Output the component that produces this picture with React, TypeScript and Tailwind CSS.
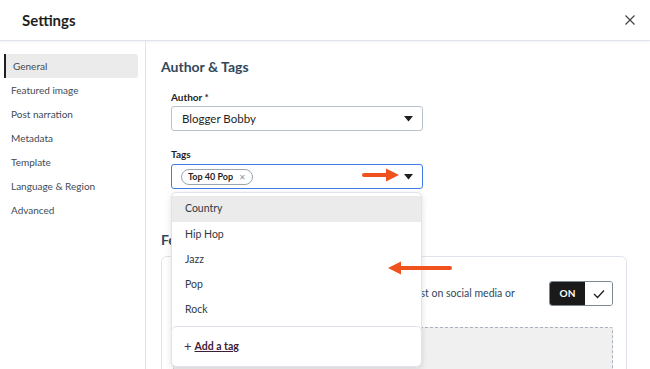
import React from "react";

const navItems = [
  "General",
  "Featured image",
  "Post narration",
  "Metadata",
  "Template",
  "Language & Region",
  "Advanced",
];

const options = ["Country", "Hip Hop", "Jazz", "Pop", "Rock"];

function Caret() {
  return (
    <svg width="9" height="6" viewBox="0 0 9 6" className="shrink-0">
      <path d="M0 0 L9 0 L4.5 5.5 Z" fill="#1f1f1f" />
    </svg>
  );
}

export default function App() {
  return (
    <div
      className="relative w-[650px] h-[369px] overflow-hidden bg-white text-[#33475b]"
      style={{ fontFamily: 'Lato, "Noto Sans", sans-serif' }}
    >
      {/* Header */}
      <div className="h-[41px] flex items-center justify-between pl-[22px] pr-[10px] border-b border-[#dfe3eb] shadow-[0_1px_2px_rgba(0,0,0,0.06)]">
        <span className="text-[15px] font-bold text-[#1f1f1f] leading-none">Settings</span>
        <svg width="20" height="20" viewBox="0 0 20 20">
          <path d="M5.5 5.5 L14.5 14.5 M14.5 5.5 L5.5 14.5" stroke="#444" strokeWidth="1.2" />
        </svg>
      </div>

      <div className="flex h-[328px]">
        {/* Sidebar */}
        <div className="w-[146px] shrink-0 border-r border-[#dfe3eb] pt-[13px] pl-[4px] pr-[7px] flex flex-col">
          {navItems.map((item, i) => (
            <div
              key={item}
              className={
                "h-[24px] flex items-center pl-[7px] text-[10px] text-[#3f4a55] rounded-r-[3px] " +
                (i === 0 ? "bg-[#ebebeb] border-l-[2.5px] border-[#1f1f1f] pl-[4.5px]" : "")
              }
            >
              {item}
            </div>
          ))}
        </div>

        {/* Main */}
        <div className="flex-1 pl-[15px] pt-[16px]">
          <h2 className="text-[14px] font-bold text-[#33475b] leading-[20px]">Author &amp; Tags</h2>

          <div className="pl-[10px] w-[262px] mt-[14px]">
            <div className="text-[10px] font-bold text-[#1f1f1f] leading-[12px]">Author *</div>
            <div className="mt-[3px] h-[25px] border border-[#b8c2cc] rounded-[3px] flex items-center justify-between pl-[10px] pr-[9px]">
              <span className="text-[11.5px] text-[#1f1f1f]">Blogger Bobby</span>
              <Caret />
            </div>

            <div className="mt-[17px] text-[10px] font-bold text-[#1f1f1f] leading-[12px]">Tags</div>
            <div className="relative mt-[4px]">
              <div className="h-[25px] border-[1.5px] border-[#3d7de6] rounded-[3px] flex items-center justify-between pl-[9px] pr-[9px]">
                <span className="h-[16px] px-[6px] rounded-full border border-[#9aa5b1] flex items-center gap-[6px] text-[9px] font-bold text-[#1f1f1f]">
                  Top 40 Pop
                  <span className="text-[#8a96a3] font-normal text-[8px]">✕</span>
                </span>
                <Caret />
              </div>

              {/* Dropdown */}
              <div className="absolute left-0 top-[28px] w-[251px] h-[175px] bg-white border border-[#dfe3eb] rounded-[5px] shadow-[0_2px_6px_rgba(0,0,0,0.12)] z-10 flex flex-col pt-[3px]">
                {options.map((o, i) => (
                  <div
                    key={o}
                    className={
                      "h-[25px] flex items-center pl-[13px] text-[10.5px] text-[#2f3a45] " +
                      (i === 0 ? "bg-[#ebebeb] h-[26px]" : "")
                    }
                  >
                    {o}
                  </div>
                ))}
                <div className="mt-auto h-[41px] border border-[#dfe3eb] rounded-[5px] -mx-px -mb-px flex items-center pl-[12px] gap-[3px]">
                  <span className="text-[13px] text-[#4b2b45] leading-none">+</span>
                  <span className="text-[10.5px] font-bold underline text-[#3f1c38]">Add a tag</span>
                </div>
              </div>
            </div>
          </div>

          <h2 className="mt-[41px] text-[14px] font-bold text-[#33475b] leading-[20px]">Featured image</h2>

          <div className="mt-[6px] w-[466px] h-[140px] border border-[#dfe3eb] rounded-[6px] pl-[11px] pr-[13px] pt-[24px]">
            <div className="flex items-center justify-between">
              <span className="text-[10.5px] text-[#33475b] pl-[76px]">
                Use a featured image on your blog post on social media or
              </span>
              <div className="flex h-[25px] border border-[#7c8792] rounded-[3px] overflow-hidden">
                <span className="w-[35px] bg-[#1a1a1a] text-white text-[10px] font-bold flex items-center justify-center">ON</span>
                <span className="w-[27px] bg-white flex items-center justify-center">
                  <svg width="12" height="10" viewBox="0 0 12 10">
                    <path d="M1 5 L4.5 8.5 L11 1.5" stroke="#1f1f1f" strokeWidth="1.3" fill="none" />
                  </svg>
                </span>
              </div>
            </div>
            <div className="mt-[21px] h-[60px] border border-dashed border-[#a9b3bd] bg-[#f0f0f0] rounded-[2px]" />
          </div>
        </div>
      </div>

      {/* Arrows */}
      <svg className="absolute left-[362px] top-[167px] z-20" width="40" height="16" viewBox="0 0 40 16">
        <path d="M2 8 L28 8" stroke="#f0521d" strokeWidth="4" strokeLinecap="round" />
        <path d="M24 1.5 L37 8 L24 14.5 Z" fill="#f0521d" />
      </svg>
      <svg className="absolute left-[385px] top-[260px] z-20" width="68" height="16" viewBox="0 0 68 16">
        <path d="M14 8 L65 8" stroke="#f0521d" strokeWidth="4" strokeLinecap="round" />
        <path d="M16 1.5 L3 8 L16 14.5 Z" fill="#f0521d" />
      </svg>
    </div>
  );
}
